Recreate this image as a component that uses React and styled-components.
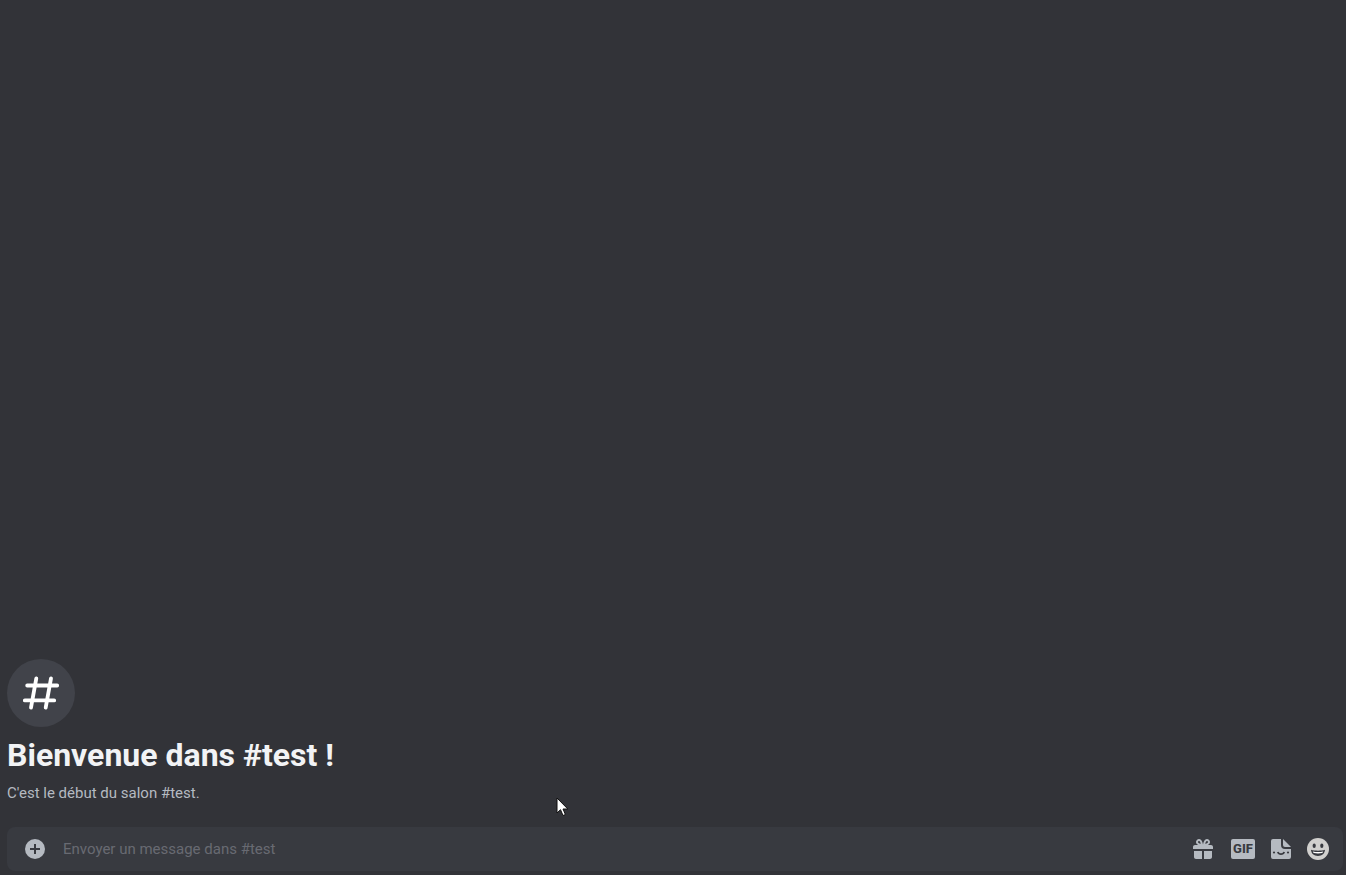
import { useState } from "react"
import styled, { createGlobalStyle } from "styled-components"

const GlobalStyle = createGlobalStyle`
  * {
    box-sizing: border-box;
  }

  body {
    margin: 0;
    background-color: #323338;
    font-family: Roboto, "Noto Sans", sans-serif;
  }
`

const Channel = styled.main`
  display: flex;
  flex-direction: column;
  justify-content: flex-end;
  min-height: 100vh;
  padding: 0 3px 4px 7px;
`

const Welcome = styled.section`
  margin-bottom: 24px;
`

const ChannelBadge = styled.div`
  display: flex;
  align-items: center;
  justify-content: center;
  width: 68px;
  height: 68px;
  border-radius: 50%;
  background-color: #41434a;
`

const WelcomeTitle = styled.h1`
  margin: 8px 0;
  color: #f2f3f5;
  font-size: 32px;
  font-weight: 700;
  line-height: 40px;
`

const WelcomeText = styled.p`
  margin: 0;
  color: #b5bac1;
  font-size: 15px;
  line-height: 20px;
`

const Composer = styled.form`
  display: flex;
  align-items: center;
  height: 44px;
  padding: 0 6px 0 8px;
  border-radius: 8px;
  background-color: #383a40;
`

const IconButton = styled.button`
  display: flex;
  align-items: center;
  justify-content: center;
  flex: none;
  width: ${({ $width }) => $width || 40}px;
  height: 44px;
  padding: 0;
  border: none;
  background: none;
  color: ${({ $color }) => $color || "#b5bac1"};
  cursor: pointer;
`

const MessageInput = styled.input`
  flex: 1;
  min-width: 0;
  height: 44px;
  padding: 0 8px;
  border: none;
  outline: none;
  background: none;
  color: #dbdee1;
  font-family: inherit;
  font-size: 15px;

  &::placeholder {
    color: #686a72;
    opacity: 1;
  }
`

const GifLabel = styled.span`
  width: 24px;
  height: 20px;
  border-radius: 2px;
  background-color: #b5bac1;
  color: #383a40;
  font-family: Roboto, sans-serif;
  font-size: 13px;
  font-weight: 800;
  line-height: 20px;
  text-align: center;
`

const Pointer = styled.svg`
  position: fixed;
  top: 797px;
  left: 556px;
  pointer-events: none;
`

const HashIcon = () => (
  <svg width="42" height="42" viewBox="0 0 42 42" fill="none" stroke="#fff" strokeWidth="3.8" strokeLinecap="round" aria-hidden="true">
    <path d="M16.3 6.300 11 35.700M31 6.300 25.700 35.700M7.200 13.500H37.200M4.800 28.400H34.200" />
  </svg>
)

const PlusIcon = () => (
  <svg width="24" height="24" viewBox="0 0 24 24" aria-hidden="true">
    <circle cx="12" cy="12" r="10" fill="currentColor" />
    <path d="M12 7v10M7 12h10" stroke="#383a40" strokeWidth="2" />
  </svg>
)

const GiftIcon = () => (
  <svg width="24" height="24" viewBox="0 0 24 24" fill="currentColor" fillRule="evenodd" aria-hidden="true">
    <path d="M16.886 8H20c1.104 0 2 .896 2 2v2H2v-2c0-1.104.897-2 2-2h3.114a5.3 5.3 0 0 1-1.235-.879c-1.17-1.17-1.17-3.073 0-4.242 1.133-1.133 3.107-1.133 4.242 0C11.3 4.058 11.744 6 11.9 7.2h.2c.156-1.2.6-3.142 1.779-4.321 1.135-1.133 3.109-1.133 4.242 0 1.17 1.169 1.17 3.072 0 4.242-.357.356-.784.643-1.235.879ZM7.293 5.707c.586.586 1.652.932 2.532 1.115-.184-.882-.528-1.94-1.118-2.53a1 1 0 0 0-1.414 1.415Zm6.881 1.117c.883-.182 1.942-.526 2.533-1.117a1 1 0 0 0-1.414-1.414c-.591.59-.934 1.648-1.119 2.531ZM3 14v6c0 1.103.897 2 2 2h6v-8H3Zm10 0v8h6c1.104 0 2-.897 2-2v-6h-8Z" />
  </svg>
)

const StickerIcon = () => (
  <svg width="24" height="24" viewBox="0 0 24 24" aria-hidden="true">
    <path fill="currentColor" d="M4 2h8v6a4 4 0 0 0 4 4h6v8a2 2 0 0 1-2 2H4a2 2 0 0 1-2-2V4a2 2 0 0 1 2-2Z" />
    <path fill="currentColor" d="M14 2l8 8h-6a2 2 0 0 1-2-2V2Z" />
    <circle cx="5" cy="15.5" r="1.1" fill="#383a40" />
    <circle cx="19" cy="15.5" r="1.1" fill="#383a40" />
    <path d="M8.800 15c.6 1.600 1.700 2.200 3.200 2.200s2.600-.6 3.200-2.200" fill="none" stroke="#383a40" strokeWidth="1.800" />
  </svg>
)

const EmojiIcon = () => (
  <svg width="24" height="24" viewBox="0 0 24 24" aria-hidden="true">
    <circle cx="12" cy="12" r="11" fill="currentColor" />
    <ellipse cx="8.200" cy="8.800" rx="1.600" ry="2.300" fill="#383a40" />
    <ellipse cx="15.800" cy="8.800" rx="1.600" ry="2.300" fill="#383a40" />
    <path d="M5 12.800c2 .6 4.500.9 7 .9s5-.3 7-.9c-.2 3.800-3 6.200-7 6.200s-6.800-2.400-7-6.200Z" fill="#383a40" />
    <path d="M6.800 14.400c3.200.8 7.200.8 10.400 0-.4 1-.8 1.500-1.200 1.700-2.400.5-5.600.5-8 0-.4-.2-.8-.7-1.200-1.700Z" fill="#fff" />
  </svg>
)

const App = () => {
  const [message, setMessage] = useState("")

  const handleSubmit = (e) => {
    e.preventDefault()
    setMessage("")
  }

  return (
    <>
      <GlobalStyle />
      <Channel>
        <Welcome>
          <ChannelBadge>
            <HashIcon />
          </ChannelBadge>
          <WelcomeTitle>Bienvenue dans #test !</WelcomeTitle>
          <WelcomeText>C'est le début du salon #test.</WelcomeText>
        </Welcome>
        <Composer onSubmit={handleSubmit}>
          <IconButton type="button" aria-label="Ajouter un fichier">
            <PlusIcon />
          </IconButton>
          <MessageInput
            type="text"
            aria-label="Envoyer un message dans #test"
            placeholder="Envoyer un message dans #test"
            value={message}
            onChange={(e) => setMessage(e.target.value)}
          />
          <IconButton type="button" aria-label="Offrir un cadeau">
            <GiftIcon />
          </IconButton>
          <IconButton type="button" aria-label="Choisir un GIF">
            <GifLabel>GIF</GifLabel>
          </IconButton>
          <IconButton type="button" aria-label="Choisir un autocollant" $width={36}>
            <StickerIcon />
          </IconButton>
          <IconButton type="button" aria-label="Choisir un émoji" $width={38} $color="#d1d0ce">
            <EmojiIcon />
          </IconButton>
        </Composer>
      </Channel>
      <Pointer width="13" height="20" viewBox="0 0 13 20" aria-hidden="true">
        <path d="M1 1v15l3.500-3.300L7 18.500l2.400-1L7 12h4.800Z" fill="#fff" stroke="#111" strokeWidth="1" />
      </Pointer>
    </>
  )
}

export default App
